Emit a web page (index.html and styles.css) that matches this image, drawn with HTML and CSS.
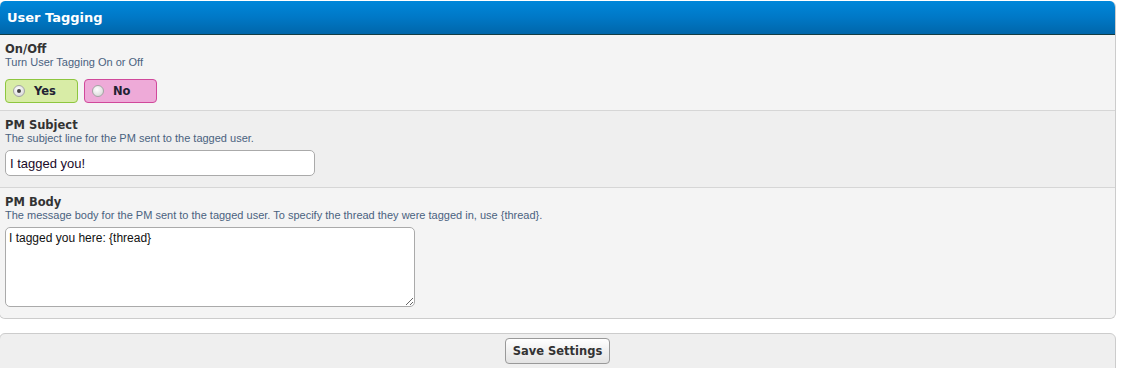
FILE: index.html
```html
<!DOCTYPE html>
<html>
<head>
<meta charset="utf-8">
<link rel="stylesheet" href="styles.css">
</head>
<body>
<div class="panel">
  <div class="panel-head">User Tagging</div>
  <div class="row row-first">
    <div class="label">On/Off</div>
    <div class="desc">Turn User Tagging On or Off</div>
    <div class="yesno">
      <label class="choice choice-yes"><span class="radio radio-on"></span><span class="choice-text">Yes</span></label>
      <label class="choice choice-no"><span class="radio"></span><span class="choice-text">No</span></label>
    </div>
  </div>
  <div class="row row-alt">
    <div class="label">PM Subject</div>
    <div class="desc">The subject line for the PM sent to the tagged user.</div>
    <input class="text-input" type="text" value="I tagged you!">
  </div>
  <div class="row row-last">
    <div class="label">PM Body</div>
    <div class="desc">The message body for the PM sent to the tagged user. To specify the thread they were tagged in, use {thread}.</div>
    <textarea class="text-area">I tagged you here: {thread}</textarea>
  </div>
</div>
<div class="buttons">
  <button class="submit" type="button">Save Settings</button>
</div>
</body>
</html>
```
FILE: styles.css
```css
html, body {
  margin: 0;
  padding: 0;
  background: #ffffff;
}
body {
  font-family: "Liberation Sans", Arial, sans-serif;
  color: #333333;
}
.panel {
  margin: 1px 7px 0 -1px;
  border: 1px solid #cccccc;
  border-top: none;
  border-radius: 6px;
  overflow: hidden;
  background: #f4f4f4;
}
.panel-head {
  height: 33px;
  line-height: 34px;
  padding-left: 7px;
  background: linear-gradient(to bottom, #0087da 0%, #0078c6 50%, #0066aa 100%);
  border-bottom: 1px solid #123c44;
  color: #ffffff;
  font-family: "DejaVu Sans", Verdana, sans-serif;
  font-weight: bold;
  font-size: 13px;
}
.row {
  padding: 7px 5px 11px;
  border-bottom: 1px solid #d6d6d6;
  background: #f4f4f4;
}
.row-first {
  padding-bottom: 7px;
}
.row-alt {
  background: #efefef;
}
.row-last {
  border-bottom: none;
}
.label {
  font-family: "DejaVu Sans", Verdana, sans-serif;
  font-weight: bold;
  font-size: 11.5px;
  line-height: 14px;
  color: #333333;
}
.desc {
  font-size: 11px;
  line-height: 13px;
  color: #4a6280;
}
.yesno {
  display: flex;
  gap: 6px;
  margin-top: 10px;
}
.choice {
  box-sizing: border-box;
  width: 73px;
  height: 24px;
  display: flex;
  align-items: center;
  padding-left: 7px;
  border-radius: 4px;
  font-family: "DejaVu Sans", Verdana, sans-serif;
  font-weight: bold;
  font-size: 11.5px;
  color: #222233;
}
.choice-yes {
  background: #d8eca6;
  border: 1px solid #8ec63f;
}
.choice-no {
  background: #eeaad8;
  border: 1px solid #d0499b;
}
.radio {
  box-sizing: border-box;
  width: 12px;
  height: 12px;
  border-radius: 50%;
  border: 1px solid #a4a4a4;
  background: radial-gradient(circle at 40% 35%, #ffffff 0%, #e6e6e6 55%, #cfcfcf 100%);
  display: flex;
  align-items: center;
  justify-content: center;
}
.radio-on::after {
  content: "";
  width: 4px;
  height: 4px;
  border-radius: 50%;
  background: #444444;
}
.choice-text {
  margin-left: 9px;
}
.text-input {
  display: block;
  box-sizing: border-box;
  width: 310px;
  height: 26px;
  margin: 5px 0 0;
  padding: 2px 4px;
  border: 1px solid #aaaaaa;
  border-radius: 5px;
  background: #ffffff;
  font-family: "Liberation Sans", Arial, sans-serif;
  font-size: 13px;
  color: #1a0a2a;
  outline: none;
}
.text-area {
  display: block;
  box-sizing: border-box;
  width: 410px;
  height: 80px;
  margin: 5px 0 0;
  padding: 3px 3px;
  border: 1px solid #aaaaaa;
  border-radius: 5px;
  background: #ffffff;
  font-family: "Liberation Sans", Arial, sans-serif;
  font-size: 12px;
  line-height: 15px;
  color: #111111;
  resize: both;
  outline: none;
}
.buttons {
  margin: 14px 7px 0 -1px;
  border: 1px solid #cccccc;
  border-radius: 6px 6px 0 0;
  background: #efefef;
  padding: 4px 0 6px;
  display: flex;
  justify-content: center;
}
.submit {
  box-sizing: border-box;
  height: 26px;
  padding: 0 7px;
  border: 1px solid #999999;
  border-radius: 4px;
  background: linear-gradient(to bottom, #ffffff 0%, #f0f0f0 50%, #e3e3e3 100%);
  font-family: "DejaVu Sans", Verdana, sans-serif;
  font-weight: bold;
  font-size: 11.5px;
  color: #333333;
  cursor: pointer;
}
```
